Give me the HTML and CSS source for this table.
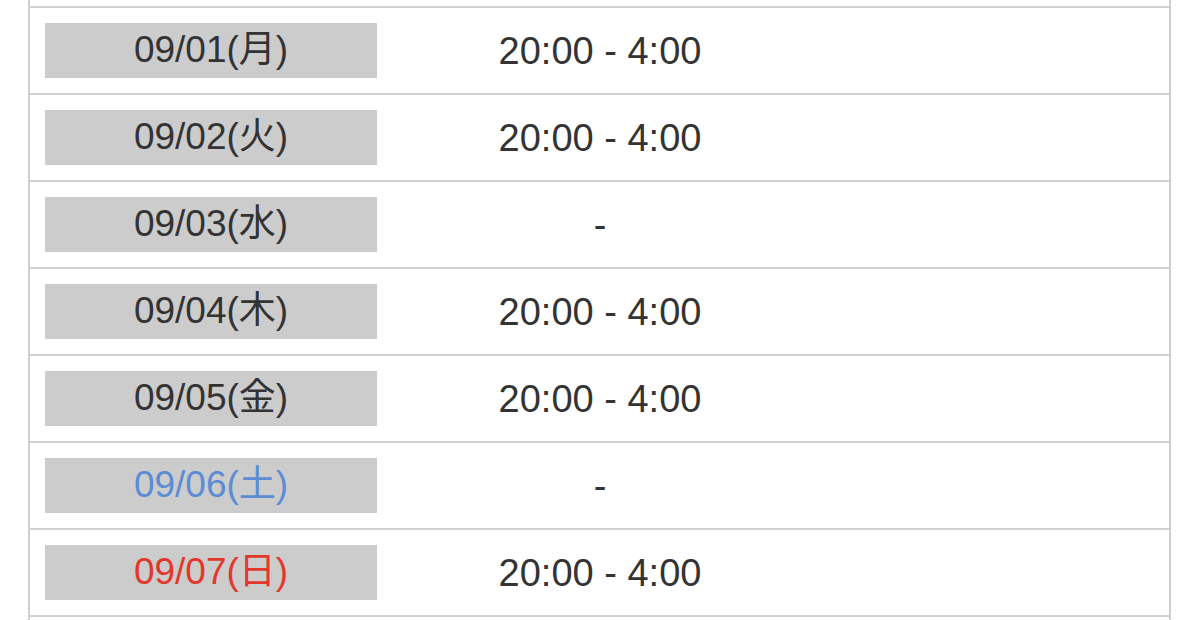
FILE: index.html
```html
<!DOCTYPE html>
<html lang="ja">
<head>
<meta charset="utf-8">
<link rel="stylesheet" href="styles.css">
</head>
<body>
<div class="table">
  <div class="lead"></div>
  <div class="row"><div class="date">09/01(月)</div><div class="time">20:00 - 4:00</div></div>
  <div class="row"><div class="date">09/02(火)</div><div class="time">20:00 - 4:00</div></div>
  <div class="row"><div class="date">09/03(水)</div><div class="time">-</div></div>
  <div class="row"><div class="date">09/04(木)</div><div class="time">20:00 - 4:00</div></div>
  <div class="row"><div class="date">09/05(金)</div><div class="time">20:00 - 4:00</div></div>
  <div class="row"><div class="date sat">09/06(土)</div><div class="time">-</div></div>
  <div class="row"><div class="date sun">09/07(日)</div><div class="time">20:00 - 4:00</div></div>
  <div class="tail"></div>
</div>
</body>
</html>
```
FILE: styles.css
```css
html, body {
  margin: 0;
  padding: 0;
  background: #fff;
  overflow: hidden;
}
body {
  font-family: "Liberation Sans", "Noto Sans CJK JP", sans-serif;
  color: #333;
}
.table {
  margin-left: 28px;
  width: 1139px;
  border-left: 2px solid #cfcfcf;
  border-right: 2px solid #cfcfcf;
}
.lead {
  height: 6px;
}
.row {
  border-top: 2px solid #d0d0d0;
  display: grid;
  grid-template-columns: 332px 446px 1fr;
  padding: 15px 0 15px 15px;
  align-items: center;
}
.tail {
  border-top: 2px solid #d0d0d0;
  height: 20px;
}
.date {
  background: #cccccc;
  height: 55px;
  display: flex;
  align-items: center;
  justify-content: center;
  font-size: 37px;
  line-height: 1;
  padding-bottom: 2px;
  box-sizing: border-box;
  color: #333;
}
.date.sat { color: #5c8dd4; }
.date.sun { color: #e2382b; }
.time {
  text-align: center;
  font-size: 38px;
  line-height: 1;
  color: #333;
}
```
